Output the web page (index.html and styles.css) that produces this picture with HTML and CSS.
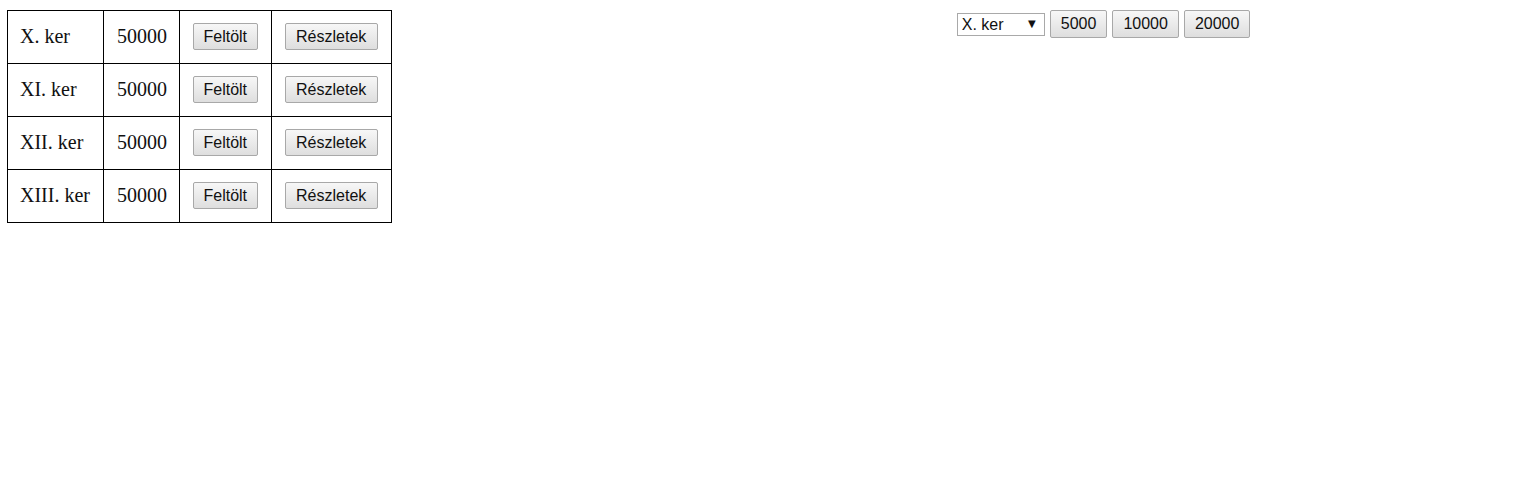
FILE: index.html
```html
<!DOCTYPE html>
<html lang="hu">
    <head>
        <meta charset="UTF-8">
        <meta name="viewport" content="width=device-width, initial-scale=1.0">
        <link rel="stylesheet" href="styles.css">
        <title>Kerületek</title>
    </head>
    <body>
        <div class="page">
            <table class="ker-table">
                <tr>
                    <td class="name">X. ker</td>
                    <td class="amount">50000</td>
                    <td><button class="btn">Feltölt</button></td>
                    <td><button class="btn btn-details">Részletek</button></td>
                </tr>
                <tr>
                    <td class="name">XI. ker</td>
                    <td class="amount">50000</td>
                    <td><button class="btn">Feltölt</button></td>
                    <td><button class="btn btn-details">Részletek</button></td>
                </tr>
                <tr>
                    <td class="name">XII. ker</td>
                    <td class="amount">50000</td>
                    <td><button class="btn">Feltölt</button></td>
                    <td><button class="btn btn-details">Részletek</button></td>
                </tr>
                <tr>
                    <td class="name">XIII. ker</td>
                    <td class="amount">50000</td>
                    <td><button class="btn">Feltölt</button></td>
                    <td><button class="btn btn-details">Részletek</button></td>
                </tr>
            </table>

            <div class="controls">
                <span class="select-wrap">
                    <select class="ker-select">
                        <option>X. ker</option>
                        <option>XI. ker</option>
                        <option>XII. ker</option>
                        <option>XIII. ker</option>
                    </select>
                </span>
                <button class="btn btn-amount">5000</button>
                <button class="btn btn-amount">10000</button>
                <button class="btn btn-amount">20000</button>
            </div>
        </div>
    </body>
</html>
```

FILE: styles.css
```css
body {
    margin: 0;
    background: #fff;
    font-family: "Liberation Serif", "Times New Roman", serif;
}

.page {
    display: flex;
    align-items: flex-start;
    padding: 10px 7px;
}

.ker-table {
    border-collapse: collapse;
    font-size: 20px;
    color: #111;
}

.ker-table td {
    border: 1px solid #000;
    padding: 12px 13px 13px 13px;
    height: 27px;
    line-height: 27px;
}

.ker-table td.name {
    padding-left: 12px;
}

.ker-table td.amount {
    padding-right: 12px;
}

.btn {
    font-family: "Liberation Sans", Arial, sans-serif;
    font-size: 16px;
    color: #111;
    height: 27px;
    padding: 0 9.5px;
    border: 1px solid #a8a8a8;
    border-radius: 2px;
    background: linear-gradient(#f7f7f7, #dedede);
    cursor: pointer;
}

.btn-details {
    padding: 0 10.5px;
}

.ker-table .btn {
    display: block;
}

.controls {
    display: flex;
    align-items: center;
    gap: 5px;
    margin-left: 565px;
}

.btn-amount {
    height: 28px;
    padding: 0 10px;
}

.select-wrap {
    position: relative;
    display: inline-block;
}

.select-wrap::after {
    content: "\25BC";
    position: absolute;
    right: 9px;
    top: 5px;
    font-family: "DejaVu Sans", sans-serif;
    font-size: 10px;
    color: #111;
    pointer-events: none;
}

.ker-select {
    appearance: none;
    -webkit-appearance: none;
    width: 88px;
    height: 23px;
    padding: 0 4px;
    font-family: "Liberation Sans", Arial, sans-serif;
    font-size: 16px;
    color: #111;
    background: #fff;
    border: 1px solid #a9a9a9;
    border-radius: 0;
    display: block;
}
```
